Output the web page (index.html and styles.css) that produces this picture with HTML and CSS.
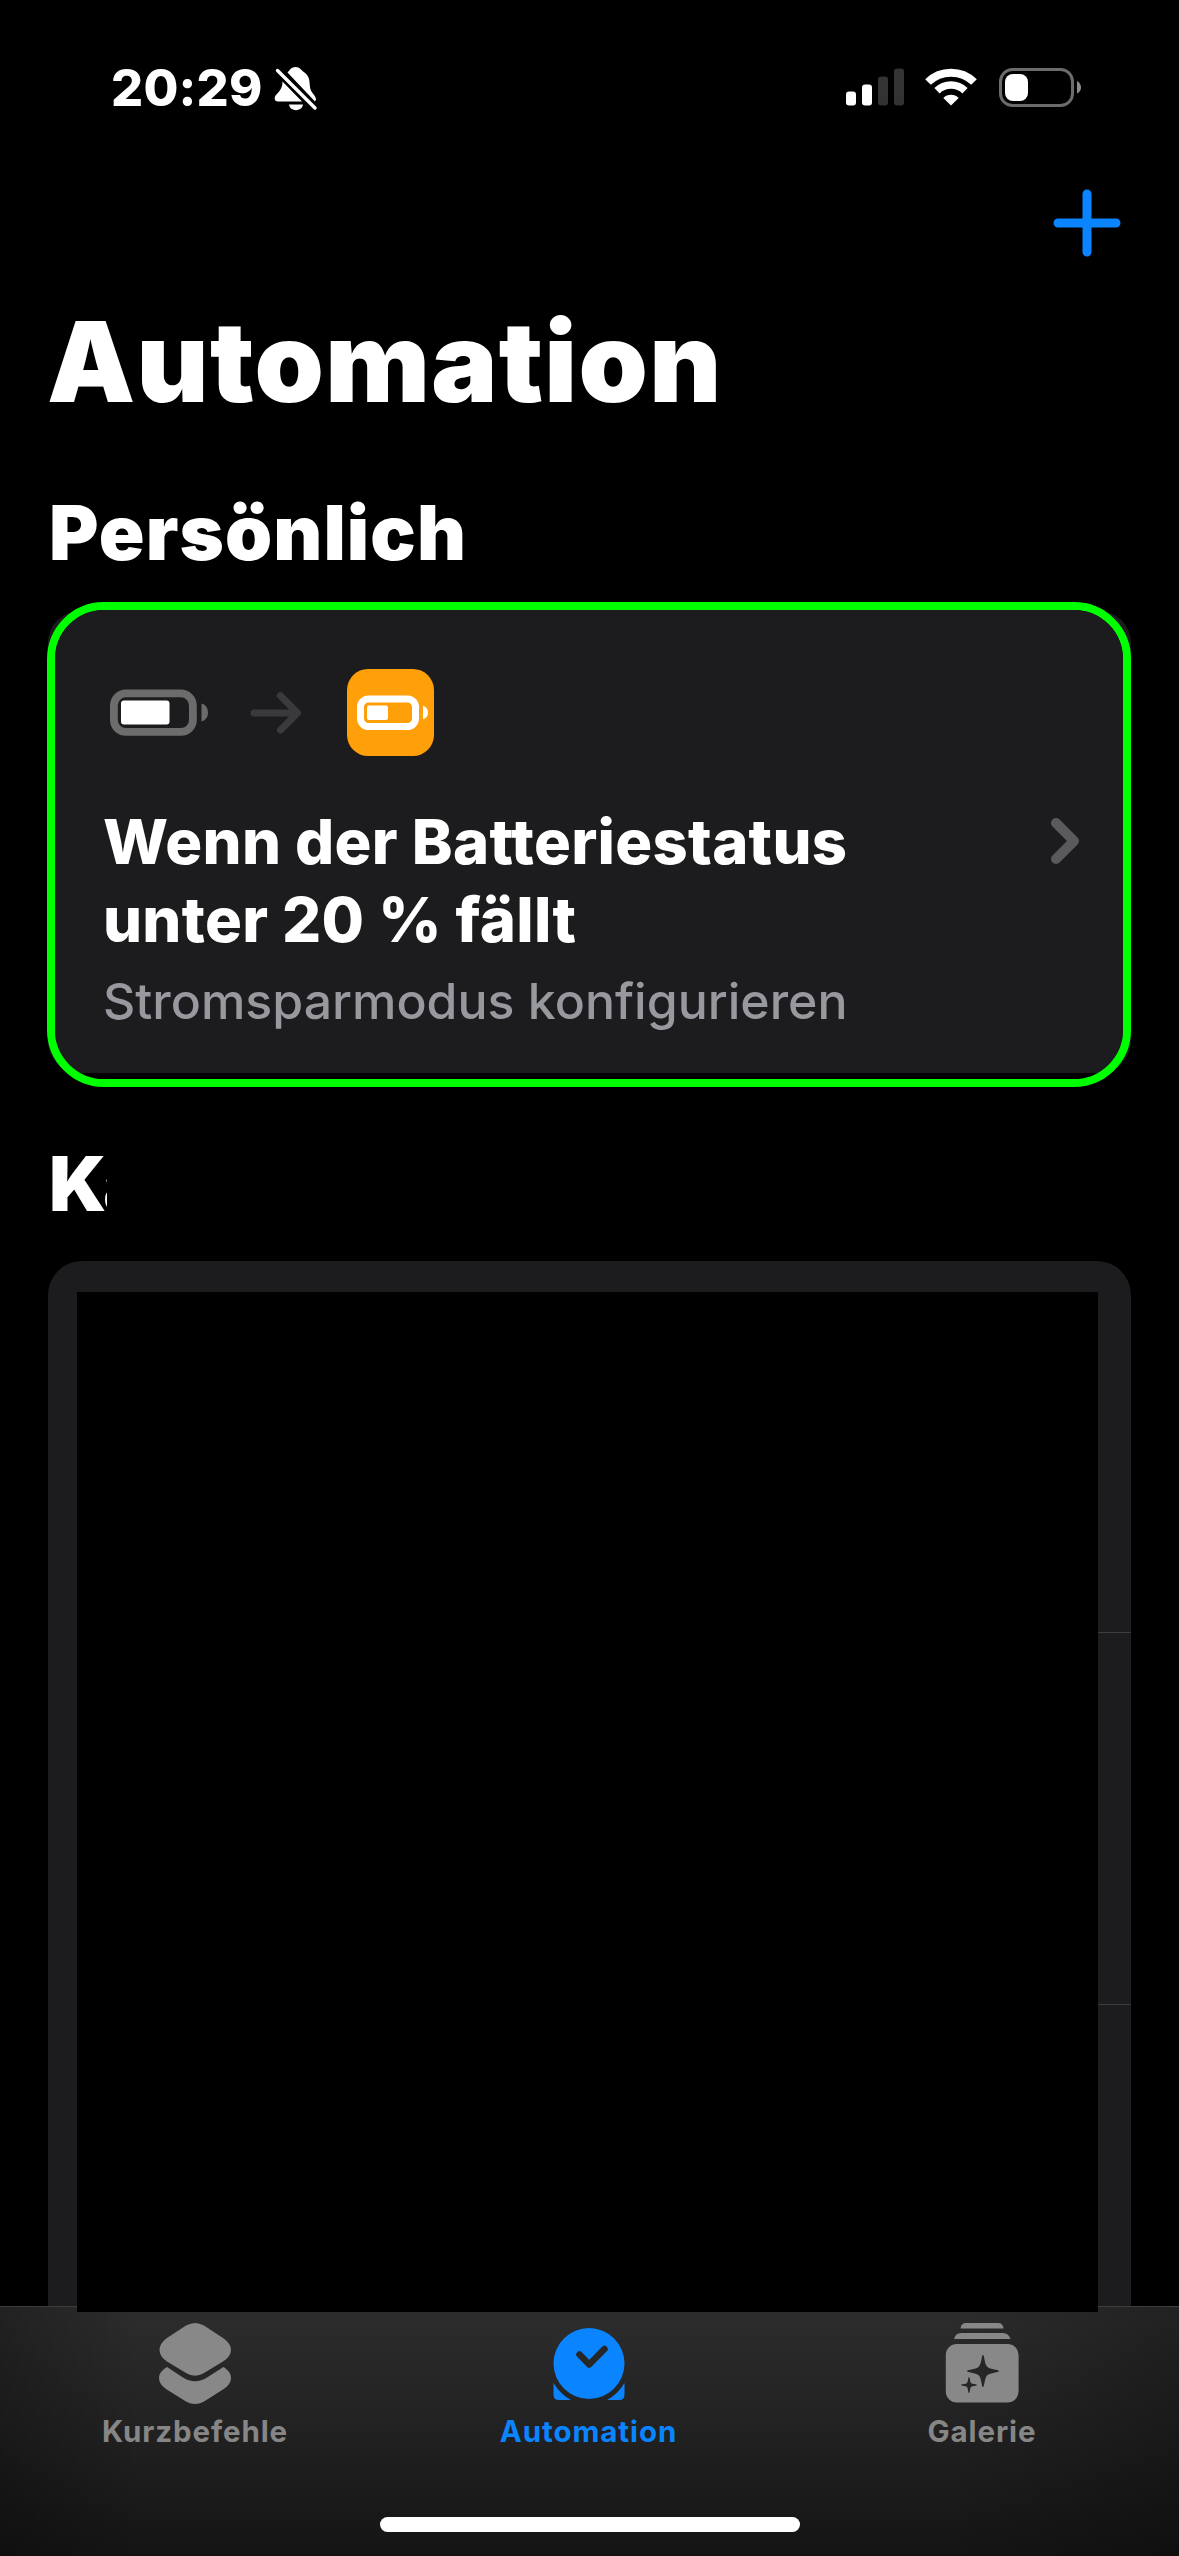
FILE: index.html
```html
<!DOCTYPE html>
<html lang="de">
<head>
    <meta charset="UTF-8">
    <meta name="viewport" content="width=device-width, initial-scale=1.0">
    <title>Automation</title>
    <link rel="stylesheet" href="styles.css">
</head>
<body>

    <!-- Statusleiste -->
    <header class="statusbar">
        <span class="time">20:29</span>
        <svg class="bell" width="44" height="46" viewBox="0 0 44 46">
            <path fill="#fff" d="M13.500 6.500 C15.500 5 16.500 1 21.500 1 C26 1 27.500 4.500 30.500 6.500 C35.500 10 35.500 15 36 21 C36.500 27 42 29 42 33.500 L41 35.500 Z"/>
            <path fill="#fff" d="M8.500 15.500 L28 35.500 L4 35.500 C0 35.500 0 31 2 29 C6 24.500 8.500 22 8.500 15.500 Z M15 38.500 H29 C28 46 16 46 15 38.500 Z"/>
            <path stroke="#fff" stroke-width="3.400" stroke-linecap="round" d="M3.500 4.500 L41 42"/>
        </svg>
        <div class="status-icons">
            <svg width="58" height="38" viewBox="0 0 58 38">
                <rect x="0" y="23.500" width="10" height="14" rx="3" fill="#fff"/>
                <rect x="16" y="16.500" width="10" height="21" rx="3" fill="#fff"/>
                <rect x="32" y="8.500" width="10" height="29" rx="3" fill="#333"/>
                <rect x="48" y="0.500" width="10" height="37" rx="3" fill="#333"/>
            </svg>
            <svg class="wifi" width="52" height="38" viewBox="0 0 52 38">
                <g fill="none" stroke="#fff">
                    <path stroke-width="8" d="M3 14 A33 33 0 0 1 49 14"/>
                    <path stroke-width="7.500" d="M12 22.800 A20 20 0 0 1 40 22.800"/>
                </g>
                <path fill="#fff" d="M26 37.500 L18.300 30 A11 11 0 0 1 33.700 30 Z"/>
            </svg>
            <svg class="battery" width="84" height="40" viewBox="0 0 84 40">
                <rect x="1.500" y="1.500" width="72" height="36" rx="12" fill="none" stroke="#6b6b6b" stroke-width="3"/>
                <rect x="6" y="6" width="23" height="27" rx="8" fill="#fff"/>
                <path fill="#8c8c8c" d="M78 13 Q82 15.500 82 19.500 Q82 23.500 78 25.500 Z"/>
            </svg>
        </div>
    </header>

    <div class="navbar">
        <svg width="68" height="68" viewBox="0 0 68 68">
            <path stroke="#0a84ff" stroke-width="9" stroke-linecap="round" d="M34 5 V63 M5 34 H63"/>
        </svg>
    </div>

    <main class="content">
        <h1>Automation</h1>
        <h2>Persönlich</h2>

        <div class="highlight">
            <div class="card">
                <div class="card-icons">
                    <svg width="100" height="48" viewBox="0 0 100 48">
                        <rect x="3.900" y="4.400" width="79" height="38.500" rx="12" fill="none" stroke="#6c6c6c" stroke-width="7.800"/>
                        <rect x="11" y="11.500" width="48.500" height="24" rx="3" fill="#fff"/>
                        <path fill="#6c6c6c" d="M91.500 14.500 Q98 16.500 98 23.500 Q98 30.500 91.500 32.500 Z"/>
                    </svg>
                    <svg class="arrow" width="52" height="42" viewBox="0 0 52 42">
                        <path fill="none" stroke="#3a3a3c" stroke-width="7" stroke-linecap="round" stroke-linejoin="round" d="M4 21 H47 M30.500 3.800 L47.500 21 L30.500 38"/>
                    </svg>
                    <div class="action-icon">
                        <svg width="72" height="36" viewBox="0 0 72 36">
                            <rect x="3.500" y="4" width="55" height="27.500" rx="8" fill="none" stroke="#fff" stroke-width="7"/>
                            <rect x="10" y="10.500" width="21" height="14.500" rx="2" fill="#fff"/>
                            <path fill="#fff" d="M66 10.500 Q71 12.500 71 17.500 Q71 22.500 66 24.500 Z"/>
                        </svg>
                    </div>
                </div>
                <div class="card-row">
                    <p class="card-title">Wenn der Batteriestatus<br>unter 20 % fällt</p>
                    <svg width="30" height="48" viewBox="0 0 30 48">
                        <path fill="none" stroke="#5a5a5e" stroke-width="10" stroke-linecap="round" stroke-linejoin="round" d="M6 6 L24 24 L6 42"/>
                    </svg>
                </div>
                <p class="card-sub">Stromsparmodus konfigurieren</p>
            </div>
        </div>

        <h2 class="cut">Ka</h2>

        <div class="list">
            <div class="row"></div>
            <div class="row"></div>
            <div class="cover"></div>
        </div>
    </main>

    <nav class="tabbar">
        <div class="tab shortcuts">
            <svg width="74" height="84" viewBox="0 0 74 84">
                <path fill="#888" d="M28 3.500 Q37 -1.500 46 3.500 L65 16 Q73 21.500 73 28 Q73 34.500 65 39.500 L46 51 Q37 56.500 28 51 L9 39.500 Q1.500 34.500 1.500 28 Q1.500 21.500 9 16 Z"/>
                <path fill="#888" d="M9 45 L25 55.500 Q37 63 49 55.500 L65.500 45 Q73 49.500 73 56 Q73 62.500 65 67.500 L46 79.500 Q37 84.500 28 79.500 L8 67 Q1 62 1 56 Q1 49.500 9 45 Z"/>
            </svg>
            <span>Kurzbefehle</span>
        </div>
        <div class="tab active">
            <svg width="74" height="84" viewBox="0 0 74 84">
                <circle cx="37" cy="41.500" r="35.500" fill="#0a84ff"/>
                <path fill="none" stroke="#272727" stroke-width="6.500" stroke-linecap="round" stroke-linejoin="round" d="M27.500 32.500 L37.200 42.500 L52.500 27"/>
                <path fill="#0a84ff" d="M1.500 61 Q8 72 19 78 H7 Q1.500 78 1.500 72.500 Z M72.500 61 Q66 72 55 78 H67 Q72.500 78 72.500 72.500 Z"/>
            </svg>
            <span>Automation</span>
        </div>
        <div class="tab gallery">
            <svg width="74" height="84" viewBox="0 0 74 84">
                <path fill="#888" d="M15.500 6.500 Q16 1 21 1 H53 Q58 1 58.500 6.500 Z M9 17 Q10.500 11 16 11 H58 Q63.500 11 65.500 17 Z"/>
                <rect x="0.800" y="22" width="72.800" height="58.500" rx="11" fill="#888"/>
                <path fill="#262626" d="M38 33 C39.500 33 39.200 41 42 44.500 C45.500 48 54 47.500 54 49 C54 50.500 45.500 50.500 42 53.500 C39.200 57 39.500 65 38 65 C36.500 65 36.800 57 34 53.500 C30.500 50.500 22 50.500 22 49 C22 47.500 30.500 48 34 44.500 C36.800 41 36.500 33 38 33 Z"/>
                <path fill="#262626" d="M24 55 C25 55 24.800 59.500 26 61 C27.500 62.300 32 62 32 63 C32 64 27.500 63.700 26 65 C24.800 66.500 25 71 24 71 C23 71 23.200 66.500 22 65 C20.500 63.700 16 64 16 63 C16 62 20.500 62.300 22 61 C23.200 59.500 23 55 24 55 Z"/>
            </svg>
            <span>Galerie</span>
        </div>
        <div class="home-indicator"></div>
    </nav>

</body>
</html>
```

FILE: styles.css
```css
* {
    box-sizing: border-box;
}
body {
    margin: 0;
    width: 1179px;
    height: 2556px;
    display: flex;
    flex-direction: column;
    overflow: hidden;
    background: #000;
    color: #fff;
    font-family: Inter, "Liberation Sans", sans-serif;
}
svg {
    display: block;
    flex: none;
}
h1, h2, p {
    margin: 0;
    white-space: nowrap;
}

/* Statusleiste */
.statusbar {
    height: 176px;
    padding: 0 96px 0 111px;
    display: flex;
    align-items: flex-start;
}
.time {
    width: 151px;
    margin-top: 58px;
    font-size: 50.5px;
    line-height: 60px;
    font-weight: 800;
    letter-spacing: 0.2px;
    white-space: nowrap;
}
.bell {
    margin: 66px 0 0 12px;
}
.status-icons {
    display: flex;
    margin: 68px 0 0 auto;
}
.wifi {
    margin-left: 21px;
}
.battery {
    margin-left: 22px;
}

.navbar {
    height: 114px;
    padding: 13px 58px 0 0;
    display: flex;
    justify-content: flex-end;
}

/* Inhalt */
.content {
    height: 2016px;
    padding: 0 48px 0 47px;
}
h1 {
    height: 204px;
    padding-top: 4px;
    font-size: 111px;
    line-height: 136px;
    font-weight: 900;
    letter-spacing: 1.3px;
}
h2 {
    height: 108px;
    padding: 1px 0 0 2px;
    font-size: 75.5px;
    line-height: 76px;
    font-weight: 900;
    letter-spacing: 1.1px;
}
.highlight {
    position: relative;
    height: 485px;
    border: 8px solid #0f0;
    border-radius: 57px;
}
/* die Karte liegt etwas versetzt unter dem Rahmen */
.highlight::before {
    content: "";
    position: absolute;
    z-index: -1;
    left: -7px;
    top: 1px;
    width: 1083px;
    height: 462px;
    background: #1c1c1e;
    border-radius: 32px;
}
.card {
    height: 463px;
    padding: 59px 43px 0 48px;
    background: #1c1c1e;
    border-radius: 49px 49px 42px 42px;
}
.card-icons {
    height: 87px;
    padding-left: 7px;
    display: flex;
    align-items: center;
}
.arrow {
    margin-left: 40px;
}
.action-icon {
    width: 87px;
    height: 87px;
    margin-left: 45px;
    padding-left: 10px;
    display: flex;
    align-items: center;
    background: #ff9f0a;
    border-radius: 21px;
}
.card-row {
    height: 156px;
    margin-top: 47px;
    display: flex;
    justify-content: space-between;
}
.card-row svg {
    margin-top: 14px;
}
.card-title {
    font-size: 61.5px;
    line-height: 78px;
    font-weight: 800;
    letter-spacing: 0.3px;
}
.card-sub {
    margin-top: 12px;
    font-size: 50px;
    line-height: 60px;
    font-weight: 500;
    color: #98989f;
}
.cut {
    position: relative;
    height: 174px;
    padding-top: 59px;
    letter-spacing: -3px;
}
.cut::after {
    content: "";
    position: absolute;
    left: 60px;
    top: 40px;
    width: 400px;
    height: 110px;
    background: #000;
}

/* zweite Liste, unten von der Tableiste abgeschnitten */
.list {
    position: relative;
    height: 1045px;
    margin-left: 1px;
    background: #1c1c1e;
    border-radius: 34px 34px 0 0;
}
.row {
    height: 372px;
    margin-left: 49px;
    border-bottom: 1px solid #3d3d3f;
}
.cover {
    position: absolute;
    left: 29px;
    top: 31px;
    width: 1021px;
    height: 1020px;
    background: #000;
    z-index: 2;
}

/* Tableiste */
.tabbar {
    height: 250px;
    padding: 15px 0 0;
    display: grid;
    grid-template-columns: repeat(3, 393px);
    grid-template-rows: 195px 15px;
    justify-items: center;
    border-top: 1px solid #3d3d3d;
    background: linear-gradient(90deg, rgba(0, 0, 0, 0.25), transparent 12%, transparent 80%, rgba(0, 0, 0, 0.25)), linear-gradient(#2d2d2d, #202020 55%, #141414);
}
.tab {
    display: flex;
    flex-direction: column;
    align-items: center;
    font-size: 29.5px;
    line-height: 36px;
    font-weight: 700;
    letter-spacing: 0.9px;
    color: #868686;
}
.tab span {
    margin-top: 7px;
}
.shortcuts {
    padding-right: 3px;
}
.gallery {
    padding-right: 1px;
}
.active {
    padding-right: 2px;
    color: #0a84ff;
}
.home-indicator {
    grid-column: 1 / 4;
    width: 420px;
    height: 15px;
    border-radius: 8px;
    background: #fff;
}
```
